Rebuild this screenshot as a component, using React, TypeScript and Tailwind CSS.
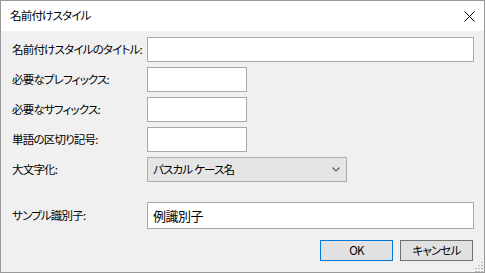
import { useState } from "react";

const font = "font-['Noto_Sans_CJK_JP','Noto_Sans',sans-serif] [font-feature-settings:'palt']";
const uiText = "text-[11.5px] leading-none tracking-[-0.8px] text-black";

const TextBox = ({ width, value = "" }: { width: string; value?: string }) => (
  <input
    defaultValue={value}
    className={`${width} h-[25px] shrink-0 border border-[#a8a8a8] bg-white px-[5px] text-[12px] text-black outline-none ${font}`}
  />
);

const Row = ({ label, children }: { label: string; children: React.ReactNode }) => (
  <div className="flex h-[25px] items-center">
    <div className={`w-[136px] shrink-0 whitespace-nowrap pl-px ${uiText}`}>{label}</div>
    {children}
  </div>
);

export default function App() {
  const [casing] = useState("パスカル ケース名");

  return (
    <div className={`flex h-[273px] w-[485px] flex-col border border-[#999999] bg-[#f0f0f0] ${font}`}>
      {/* Title bar */}
      <div className="flex h-[30px] shrink-0 items-center justify-between bg-white pl-[9px] pr-[9px]">
        <span className={uiText}>名前付けスタイル</span>
        <svg width="11" height="11" viewBox="0 0 11 11">
          <path d="M0.5 0.5 L10.5 10.5 M10.5 0.5 L0.5 10.5" stroke="#000" strokeWidth="1" fill="none" />
        </svg>
      </div>

      {/* Body */}
      <div className="relative flex flex-1 flex-col px-[10px] pt-[6px]">
        <div className="flex flex-col gap-[5px]">
          <Row label="名前付けスタイルのタイトル:">
            <TextBox width="w-[327px]" />
          </Row>
          <Row label="必要なプレフィックス:">
            <TextBox width="w-[100px]" />
          </Row>
          <Row label="必要なサフィックス:">
            <TextBox width="w-[100px]" />
          </Row>
          <Row label="単語の区切り記号:">
            <TextBox width="w-[100px]" />
          </Row>
          <Row label="大文字化:">
            <div className="flex h-[25px] w-[200px] shrink-0 items-center justify-between border border-[#acacac] bg-[#e5e5e5] pl-[5px] pr-[6px]">
              <span className={uiText}>{casing}</span>
              <svg width="8" height="5" viewBox="0 0 8 5">
                <path d="M0.5 0.5 L4 4 L7.5 0.5" stroke="#606060" strokeWidth="1.2" fill="none" />
              </svg>
            </div>
          </Row>
        </div>

        <div className="mt-[20px] flex h-[27px] items-center">
          <div className={`w-[136px] shrink-0 whitespace-nowrap pl-px ${uiText}`}>サンプル識別子:</div>
          <div className="flex h-[27px] w-[327px] shrink-0 items-center border border-[#a8a8a8] bg-white pl-[5px] text-[13px] leading-none tracking-[-0.5px] text-black">
            例識別子
          </div>
        </div>

        <div className="mt-[11px] flex justify-end gap-[7px] pr-px">
          <button className={`h-[21px] w-[73px] border border-[#0078d7] bg-[#e1e1e1] ${uiText}`}>OK</button>
          <button className={`h-[21px] w-[73px] border border-[#707070] bg-[#e1e1e1] ${uiText}`}>キャンセル</button>
        </div>

        {/* Resize grip */}
        <svg width="10" height="10" viewBox="0 0 10 10" className="absolute bottom-0 right-0">
          {[
            [8, 0], [8, 3], [5, 3], [8, 6], [5, 6], [2, 6], [8, 9], [5, 9], [2, 9],
          ].map(([x, y]) => (
            <rect key={`${x}-${y}`} x={x - 1} y={y} width="2" height="1" fill="#b8b8b8" />
          ))}
        </svg>
      </div>
    </div>
  );
}
